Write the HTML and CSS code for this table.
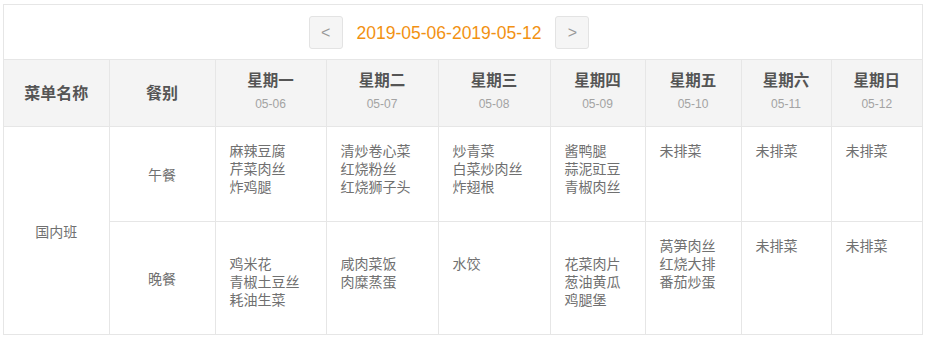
FILE: index.html
```html
<!DOCTYPE html>
<html lang="zh">
<head>
<meta charset="utf-8">
<link rel="stylesheet" href="styles.css">
</head>
<body>
<div class="menu-board">
  <div class="week-nav">
    <button class="nav-btn">&lt;</button>
    <span class="week-range">2019-05-06-2019-05-12</span>
    <button class="nav-btn">&gt;</button>
  </div>
  <table class="menu-table">
    <colgroup>
      <col class="c-name"><col class="c-meal">
      <col class="c1"><col class="c2"><col class="c3"><col class="c4">
      <col class="c5"><col class="c6"><col class="c7">
    </colgroup>
    <thead>
      <tr>
        <th class="th-main">菜单名称</th>
        <th class="th-main">餐别</th>
        <th><div class="day">星期一</div><div class="date">05-06</div></th>
        <th><div class="day">星期二</div><div class="date">05-07</div></th>
        <th><div class="day">星期三</div><div class="date">05-08</div></th>
        <th><div class="day">星期四</div><div class="date">05-09</div></th>
        <th><div class="day">星期五</div><div class="date">05-10</div></th>
        <th><div class="day">星期六</div><div class="date">05-11</div></th>
        <th><div class="day">星期日</div><div class="date">05-12</div></th>
      </tr>
    </thead>
    <tbody>
      <tr>
        <td class="group" rowspan="2">国内班</td>
        <td class="meal">午餐</td>
        <td class="dishes">麻辣豆腐<br>芹菜肉丝<br>炸鸡腿</td>
        <td class="dishes">清炒卷心菜<br>红烧粉丝<br>红烧狮子头</td>
        <td class="dishes">炒青菜<br>白菜炒肉丝<br>炸翅根</td>
        <td class="dishes">酱鸭腿<br>蒜泥豇豆<br>青椒肉丝</td>
        <td class="dishes">未排菜</td>
        <td class="dishes">未排菜</td>
        <td class="dishes">未排菜</td>
      </tr>
      <tr>
        <td class="meal">晚餐</td>
        <td class="dishes"><br>鸡米花<br>青椒土豆丝<br>耗油生菜</td>
        <td class="dishes"><br>咸肉菜饭<br>肉糜蒸蛋</td>
        <td class="dishes"><br>水饺</td>
        <td class="dishes"><br>花菜肉片<br>葱油黄瓜<br>鸡腿堡</td>
        <td class="dishes">莴笋肉丝<br>红烧大排<br>番茄炒蛋</td>
        <td class="dishes">未排菜</td>
        <td class="dishes">未排菜</td>
      </tr>
    </tbody>
  </table>
</div>
</body>
</html>
```

FILE: styles.css
```css
html, body {
  margin: 0;
  padding: 0;
  background: #fff;
}

body {
  font-family: "Liberation Sans", "Noto Sans CJK SC", sans-serif;
  color: #666;
}

.menu-board {
  margin: 4px 0 0 3px;
  width: 920px;
  box-sizing: border-box;
  border: 1px solid #e6e6e6;
}

.week-nav {
  display: flex;
  align-items: center;
  justify-content: center;
  gap: 14px;
  height: 55px;
  padding: 0 28px 0 0;
  box-sizing: border-box;
  border-bottom: 1px solid #e6e6e6;
}

.nav-btn {
  width: 34px;
  height: 33px;
  padding: 0;
  border: 1px solid #e3e3e3;
  border-radius: 3px;
  background: #f5f5f5;
  color: #999;
  font-family: "Liberation Sans", sans-serif;
  font-size: 16px;
  line-height: 31px;
}

.week-range {
  color: #f29112;
  font-size: 17.5px;
  line-height: 22px;
  margin-top: 2px;
}

.menu-table {
  width: 918px;
  table-layout: fixed;
  border-collapse: collapse;
  border-style: hidden;
}

.c-name { width: 105px; }
.c-meal { width: 106px; }
.c1 { width: 111px; }
.c2 { width: 112px; }
.c3 { width: 112px; }
.c4 { width: 95px; }
.c5 { width: 96px; }
.c6 { width: 90px; }
.c7 { width: 91px; }

.menu-table th,
.menu-table td {
  border: 1px solid #e6e6e6;
}

.menu-table th {
  background: #f4f4f4;
  color: #555;
  font-weight: bold;
  text-align: center;
  padding: 10px 0 12px;
  height: 44px;
}

.th-main {
  font-size: 16px;
}

.day {
  font-size: 15.5px;
  line-height: 22px;
}

.date {
  margin-top: 2px;
  font-size: 12px;
  line-height: 20px;
  font-weight: normal;
  color: #a3a3a3;
}

.group,
.meal {
  text-align: center;
  vertical-align: middle;
  font-size: 14px;
  color: #707070;
}

.dishes {
  vertical-align: top;
  font-size: 14px;
  line-height: 18px;
  color: #707070;
  padding: 15px 10px 25px 14px;
}
```
